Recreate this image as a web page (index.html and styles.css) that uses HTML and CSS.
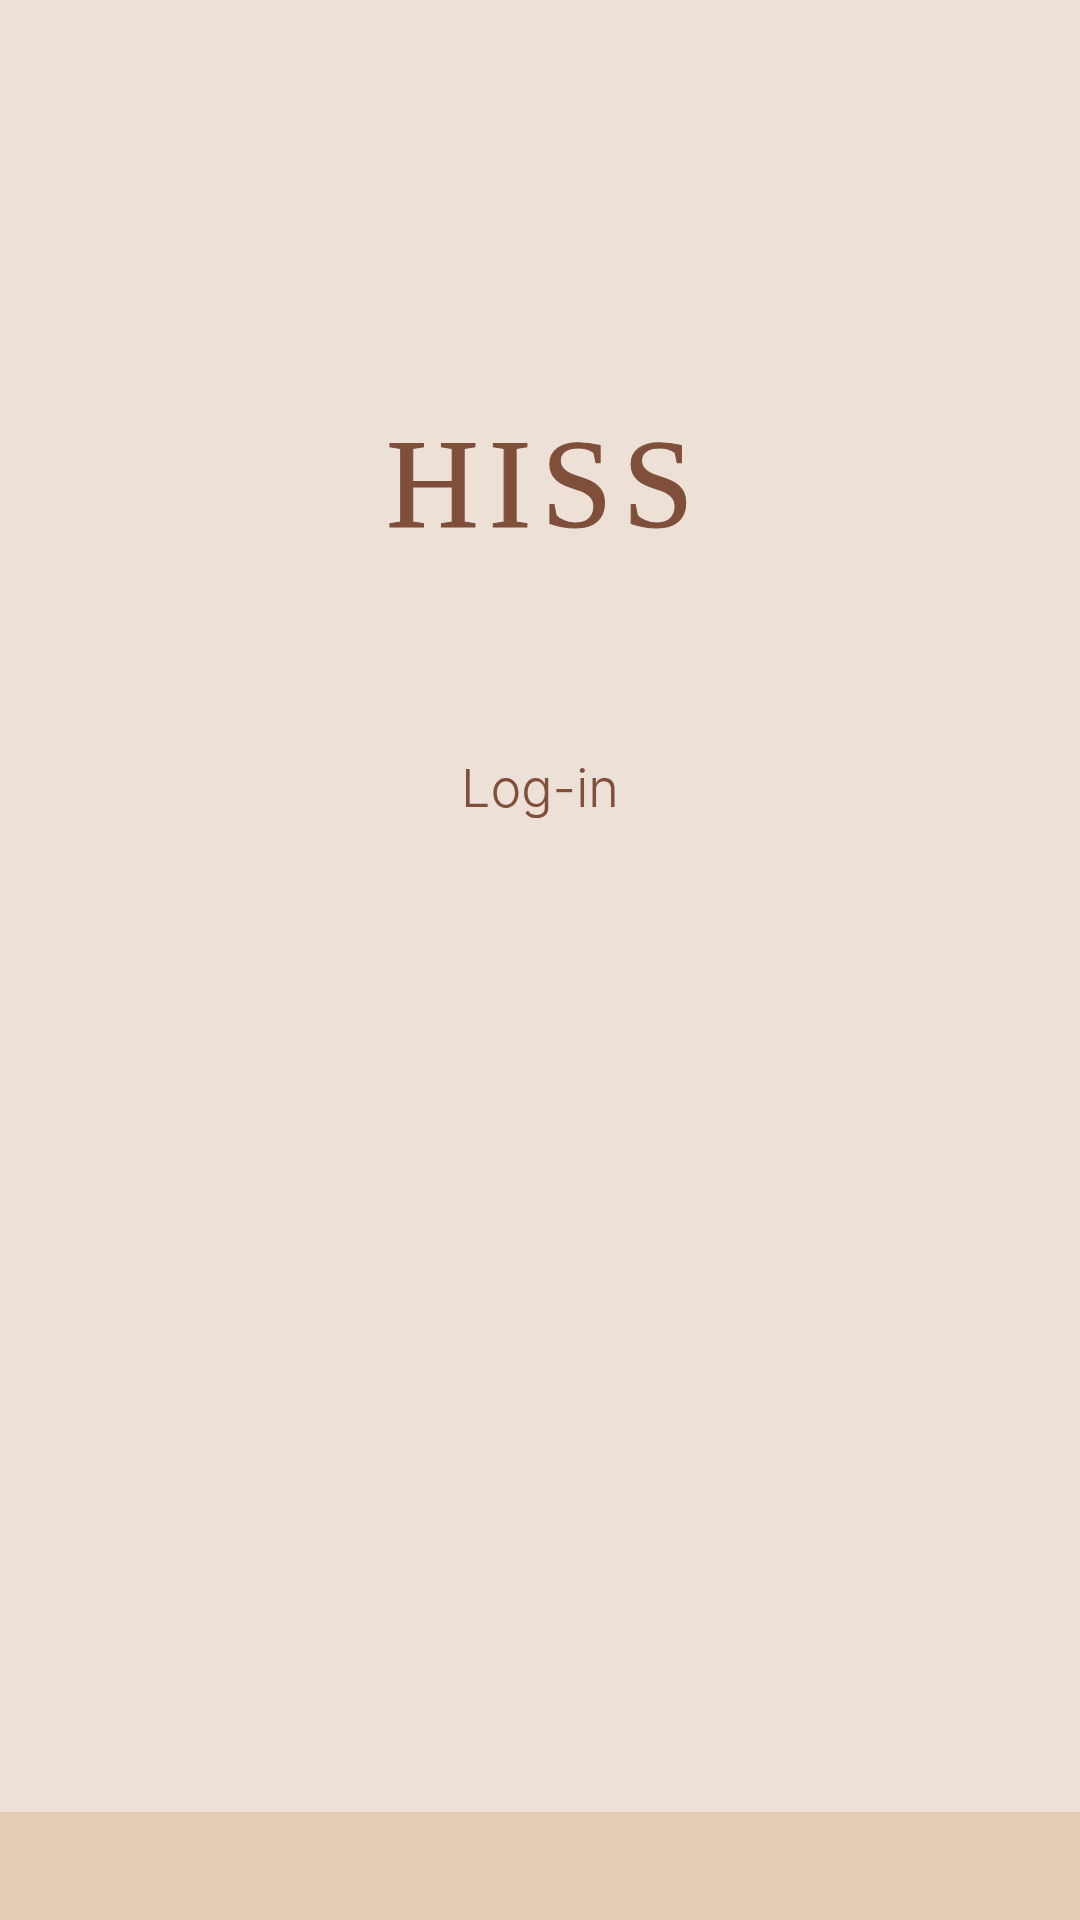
FILE: index.html
```html
<!DOCTYPE html>
<html>
<head>
<meta charset="utf-8">
<link rel="stylesheet" href="styles.css">
</head>
<body>
<div class="screen">
  <main class="content">
    <h1 class="logo">HISS</h1>
    <a class="login" href="#">Log-in</a>
  </main>
  <footer class="bottom"></footer>
</div>
</body>
</html>
```
FILE: styles.css
```css
html, body {
  margin: 0;
  padding: 0;
}
body {
  background: #ede1d7;
}
.screen {
  width: 1080px;
  height: 1920px;
  display: flex;
  flex-direction: column;
}
.content {
  flex: 1;
  display: flex;
  flex-direction: column;
  align-items: center;
  padding-top: 414px;
}
.logo {
  margin: 0;
  font-family: "Liberation Serif", serif;
  font-weight: 400;
  font-size: 128px;
  line-height: 140px;
  letter-spacing: 10px;
  margin-right: -10px;
  color: #7f4f3a;
  -webkit-text-stroke: 1px #7f4f3a;
}
.login {
  margin-top: 203px;
  font-family: Inter, sans-serif;
  font-weight: 300;
  font-size: 52px;
  line-height: 64px;
  color: #7f4f3a;
  text-decoration: none;
}
.bottom {
  height: 108px;
  background: #e4cbb3;
}
```
